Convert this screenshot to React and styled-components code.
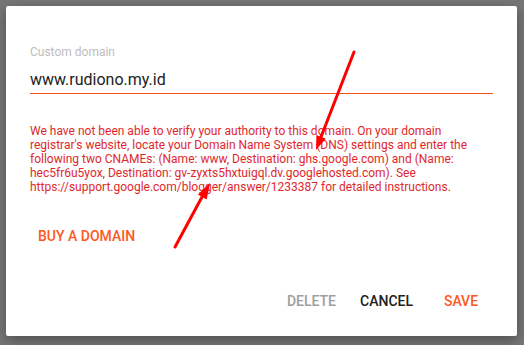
import React from "react";
import styled, { createGlobalStyle } from "styled-components";

const GlobalStyle = createGlobalStyle`
  html, body {
    margin: 0;
    padding: 0;
    background: #777777;
    font-family: Roboto, "Liberation Sans", Arial, sans-serif;
  }
`;

const Backdrop = styled.div`
  width: 524px;
  height: 345px;
  padding: 6px 7px 9px 6px;
  box-sizing: border-box;
  background: #777777;
  position: relative;
  overflow: hidden;
`;

const Dialog = styled.div`
  height: 330px;
  background: #fff;
  border-radius: 2px;
  box-shadow: 0 4px 14px rgba(0, 0, 0, 0.35);
  display: flex;
  flex-direction: column;
  box-sizing: border-box;
`;

const Body = styled.div`
  padding: 38px 24px 0 24px;
  display: flex;
  flex-direction: column;
  align-items: flex-start;
`;

const Field = styled.div`
  display: flex;
  flex-direction: column;
  align-self: stretch;
`;

const Label = styled.label`
  font-size: 12px;
  line-height: 16px;
  color: #bdbdbd;
`;

const Input = styled.div`
  margin-top: 10px;
  font-size: 16px;
  line-height: 20px;
  color: #212121;
  padding-bottom: 3px;
  border-bottom: 1px solid #f4511e;
`;

const ErrorText = styled.p`
  margin: 30px 0 0;
  font-size: 12px;
  line-height: 14px;
  color: #e0282c;
`;

const Button = styled.button`
  border: none;
  background: none;
  min-width: 64px;
  height: 36px;
  padding: 0 8px;
  font-family: inherit;
  font-size: 14px;
  font-weight: 500;
  text-transform: uppercase;
  letter-spacing: 0;
  color: ${(p) => (p.$tone === "primary" ? "#ff5722" : p.$tone === "disabled" ? "#9e9e9e" : "#212121")};
  cursor: ${(p) => (p.$tone === "disabled" ? "default" : "pointer")};
`;

const BuyButton = styled(Button)`
  margin-top: 24px;
`;

const Actions = styled.div`
  margin-top: auto;
  padding: 0 24px 17px;
  display: flex;
  justify-content: flex-end;
  gap: 8px;
`;

const Annotations = styled.svg`
  position: absolute;
  left: 0;
  top: 0;
  width: 524px;
  height: 345px;
  pointer-events: none;
`;

const Arrow = ({ line, head }) => (
  <g>
    <line x1={line[0]} y1={line[1]} x2={line[2]} y2={line[3]} stroke="#ff0000" strokeWidth="3" strokeLinecap="round" />
    <polygon points={head} fill="#ff0000" />
  </g>
);

const App = () => (
  <>
    <GlobalStyle />
    <Backdrop>
      <Dialog>
        <Body>
          <Field>
            <Label>Custom domain</Label>
            <Input>www.rudiono.my.id</Input>
          </Field>
          <ErrorText>
            We have not been able to verify your authority to this domain. On your domain registrar&apos;s website,
            locate your Domain Name System (DNS) settings and enter the following two CNAMEs: (Name: www,
            Destination: ghs.google.com) and (Name: hec5fr6u5yox, Destination:
            gv-zyxts5hxtuigql.dv.googlehosted.com). See https://support.google.com/blogger/answer/1233387 for
            detailed instructions.
          </ErrorText>
          <BuyButton $tone="primary">Buy a domain</BuyButton>
        </Body>
        <Actions>
          <Button $tone="disabled">Delete</Button>
          <Button>Cancel</Button>
          <Button $tone="primary">Save</Button>
        </Actions>
      </Dialog>
      <Annotations viewBox="0 0 524 345">
        <Arrow line={[354, 52, 321, 137]} head="316,150 325.7,138.7 316.4,135.1" />
        <Arrow line={[175, 247, 202, 197]} head="210,183 206.7,199.4 197.9,194.6" />
      </Annotations>
    </Backdrop>
  </>
);

export default App;
